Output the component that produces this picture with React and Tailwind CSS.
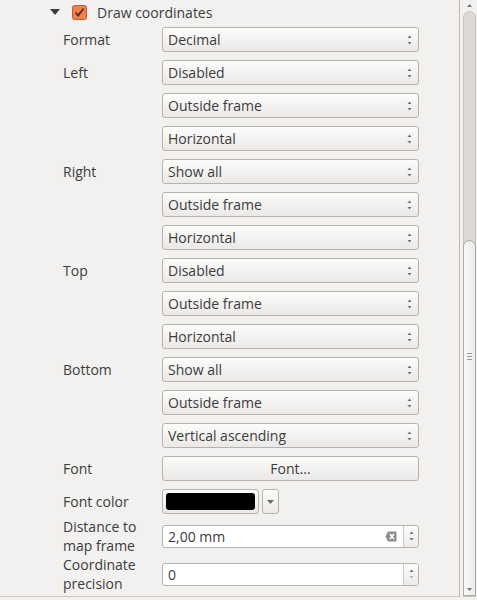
import React from 'react';

const font = { fontFamily: '"Open Sans", "Noto Sans", sans-serif' };

const SpinArrows = ({ downLight = false }) => (
    <svg width="7" height="12" viewBox="0 0 7 12" className="shrink-0">
        <path d="M3.5 1.5 L5.5 4 L1.5 4 Z" fill="#707070" />
        <path d="M3.5 10.5 L5.5 8 L1.5 8 Z" fill={downLight ? '#b8b6b3' : '#707070'} />
    </svg>
);

const Combo = ({ value }) => (
    <div className="h-[25px] w-[257px] flex items-center justify-between pl-[5px] pr-[5px] rounded-[3px] border border-[#b6b3ae] bg-gradient-to-b from-[#fcfcfb] to-[#ebe9e7] text-[#3c3c3c] text-[14px]">
        <span>{value}</span>
        <SpinArrows />
    </div>
);

const Row = ({ label, children, className = 'h-[25px] mt-[8px]' }) => (
    <div className={`flex items-center ${className}`}>
        <div className="w-[99px] text-[14px] leading-[19px] text-[#3c3c3c]">{label}</div>
        {children}
    </div>
);

const SpinField = ({ value, clear = false, downLight = false }) => (
    <div className="h-[23px] w-[257px] flex rounded-[3px] border border-[#b6b3ae] bg-white overflow-hidden">
        <div className="flex-1 flex items-center justify-between pl-[5px] pr-[6px] text-[14px] text-[#3c3c3c]">
            <span>{value}</span>
            {clear && (
                <svg width="12" height="11" viewBox="0 0 12 11">
                    <path d="M3 0.5 H11 Q11.5 0.5 11.5 1 V10 Q11.5 10.5 11 10.5 H3 L0.5 5.5 Z" fill="#8e8e8e" />
                    <path d="M5 3 L9 8 M9 3 L5 8" stroke="#ffffff" strokeWidth="1.5" />
                </svg>
            )}
        </div>
        <div className="w-[15px] border-l border-[#cfccc8] bg-gradient-to-b from-[#fbfbfa] to-[#eeecea] flex items-center justify-center">
            <SpinArrows downLight={downLight} />
        </div>
    </div>
);

export default function App() {
    const rows = [
        ['Left', 'Disabled'],
        ['', 'Outside frame'],
        ['', 'Horizontal'],
        ['Right', 'Show all'],
        ['', 'Outside frame'],
        ['', 'Horizontal'],
        ['Top', 'Disabled'],
        ['', 'Outside frame'],
        ['', 'Horizontal'],
        ['Bottom', 'Show all'],
        ['', 'Outside frame'],
        ['', 'Vertical ascending'],
    ];

    return (
        <div className="w-[477px] h-[600px] bg-[#f2f1f0] flex overflow-hidden" style={font}>
            <div className="w-[460px] h-[597px] border-b border-[#c9c6c2] border-r border-r-[#bdbab6] flex flex-col pl-[63px]">
                <div className="h-[24px] flex items-center -ml-[13px]">
                    <svg width="10" height="6" viewBox="0 0 10 6" className="mr-[12px]">
                        <path d="M0 0 H10 L5 6 Z" fill="#3c3c3c" />
                    </svg>
                    <svg width="15" height="15" viewBox="0 0 15 15" className="mr-[10px]">
                        <rect x="0.5" y="0.5" width="14" height="14" rx="2" fill="#ee8150" stroke="#c85a2a" />
                        <path d="M3.5 7.5 L6.2 10.5 L11.5 3.5" fill="none" stroke="#5b2a12" strokeWidth="1.8" />
                    </svg>
                    <span className="text-[14px] text-[#3c3c3c]">Draw coordinates</span>
                </div>

                <Row label="Format" className="h-[25px] mt-[3px]">
                    <Combo value="Decimal" />
                </Row>
                {rows.map(([label, value], i) => (
                    <Row key={i} label={label}>
                        <Combo value={value} />
                    </Row>
                ))}

                <Row label="Font">
                    <div className="h-[25px] w-[257px] flex items-center justify-center rounded-[3px] border border-[#b6b3ae] bg-gradient-to-b from-[#fcfcfb] to-[#ebe9e7] text-[#3c3c3c] text-[14px]">
                        Font...
                    </div>
                </Row>

                <Row label="Font color">
                    <div className="flex gap-[3px]">
                        <div className="h-[25px] w-[97px] rounded-[3px] border border-[#b6b3ae] bg-gradient-to-b from-[#fcfcfb] to-[#ebe9e7] p-[3px]">
                            <div className="w-full h-full bg-black rounded-[3px]" />
                        </div>
                        <div className="h-[25px] w-[17px] rounded-[3px] border border-[#b6b3ae] bg-gradient-to-b from-[#fcfcfb] to-[#ebe9e7] flex items-center justify-center">
                            <svg width="7" height="4" viewBox="0 0 7 4">
                                <path d="M0 0 H7 L3.5 4 Z" fill="#6b6b6b" />
                            </svg>
                        </div>
                    </div>
                </Row>

                <Row label={<>Distance to<br />map frame</>} className="h-[38px] mt-[3px]">
                    <SpinField value="2,00 mm" clear />
                </Row>

                <Row label={<>Coordinate<br />precision</>} className="h-[38px] mt-0">
                    <SpinField value="0" downLight />
                </Row>
            </div>

            <div className="w-[17px] h-[597px] pl-[3px] flex flex-col">
                <div className="h-[11px] w-[13px] flex items-center justify-center">
                    <svg width="5" height="3" viewBox="0 0 5 3">
                        <path d="M2.5 0 L5 3 H0 Z" fill="#777" />
                    </svg>
                </div>
                <div className="flex-1 w-[13px] rounded-t-full border border-[#c6c3bf] bg-[#dddad6] flex flex-col pt-[228px]">
                    <div className="flex-1 -mx-px rounded-t-full rounded-b-[6px] border border-[#aeaba6] bg-gradient-to-r from-[#fafafa] to-[#ebebeb] flex flex-col items-center justify-between pt-[112px] pb-[4px]">
                        <div className="flex flex-col gap-[2px]">
                            <div className="w-[5px] h-px bg-[#9a9894]" />
                            <div className="w-[5px] h-px bg-[#9a9894]" />
                            <div className="w-[5px] h-px bg-[#9a9894]" />
                        </div>
                        <svg width="5" height="3" viewBox="0 0 5 3">
                            <path d="M0 0 H5 L2.5 3 Z" fill="#777" />
                        </svg>
                    </div>
                </div>
            </div>
        </div>
    );
}
